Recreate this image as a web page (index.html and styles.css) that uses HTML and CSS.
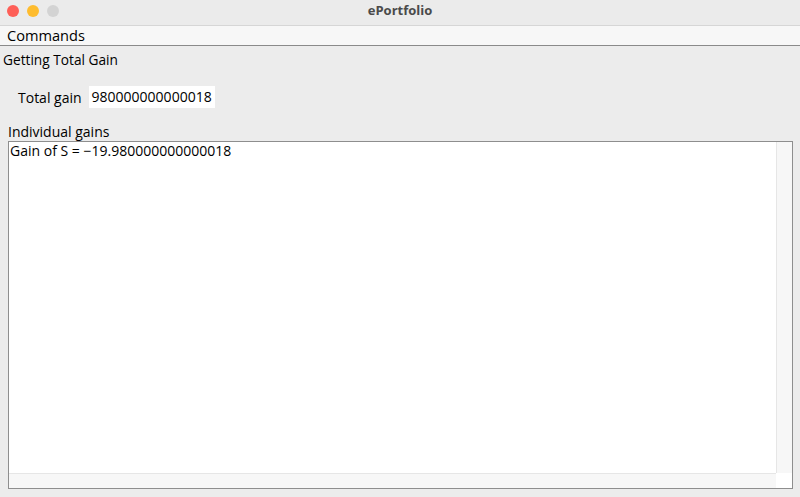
FILE: index.html
```html
<!DOCTYPE html>
<html>
<head>
<meta charset="utf-8">
<link rel="stylesheet" href="styles.css">
</head>
<body>
<div class="window">
  <div class="titlebar">
    <div class="lights">
      <span class="light red"></span>
      <span class="light yellow"></span>
      <span class="light gray"></span>
    </div>
    <div class="title">ePortfolio</div>
  </div>
  <div class="menubar"><span class="menu">Commands</span></div>
  <div class="content">
    <div class="heading">Getting Total Gain</div>
    <div class="row">
      <span class="label">Total gain</span>
      <span class="field">980000000000018</span>
    </div>
    <div class="section-label">Individual gains</div>
    <div class="textarea">
      <div class="text-main">
        <div class="text">Gain of S = −19.980000000000018</div>
        <div class="vscroll"></div>
      </div>
      <div class="hscroll-row">
        <div class="hscroll"></div>
        <div class="corner"></div>
      </div>
    </div>
  </div>
</div>
</body>
</html>
```

FILE: styles.css
```css
html, body {
  margin: 0;
  padding: 0;
}
body {
  width: 800px;
  height: 497px;
  overflow: hidden;
  background: #ececec;
  font-family: "Open Sans", "DejaVu Sans", sans-serif;
  color: #000;
}
.window {
  display: flex;
  flex-direction: column;
  height: 497px;
}
.titlebar {
  height: 25px;
  background: #ebebeb;
  border-bottom: 1px solid #d6d6d6;
  display: flex;
  align-items: center;
  position: relative;
}
.lights {
  display: flex;
  gap: 8px;
  padding-left: 7px;
  margin-top: -3px;
}
.light {
  width: 12px;
  height: 12px;
  border-radius: 50%;
  display: block;
}
.red { background: #fe5f57; }
.yellow { background: #febc2e; }
.gray { background: #d3d3d3; }
.title {
  position: absolute;
  left: 0;
  right: 0;
  top: 0;
  line-height: 21px;
  text-align: center;
  font-weight: bold;
  font-size: 13px;
  color: #4a4a4a;
}
.menubar {
  height: 19px;
  background: #f7f7f7;
  border-bottom: 1px solid #8a8a8a;
  padding-left: 7px;
  font-size: 14.6px;
  line-height: 19px;
}
.content {
  flex: 1;
  display: flex;
  flex-direction: column;
  font-size: 14px;
}
.heading {
  padding-left: 3px;
  margin-top: 5px;
  line-height: 18px;
  font-size: 13.7px;
}
.row {
  display: flex;
  align-items: center;
  margin-top: 17px;
  padding-left: 18px;
  gap: 7px;
}
.field {
  background: #fff;
  height: 22px;
  line-height: 22px;
  padding: 0 0 0 3px;
  width: 123px;
  white-space: nowrap;
  overflow: hidden;
}
.section-label {
  padding-left: 8px;
  margin-top: 15px;
  line-height: 18px;
}
.textarea {
  margin: 0 7px 0 8px;
  height: 346px;
  border: 1px solid #8e8e8e;
  background: #fff;
  display: flex;
  flex-direction: column;
}
.text-main {
  flex: 1;
  display: flex;
}
.text {
  flex: 1;
  padding-left: 1px;
  line-height: 18px;
}
.vscroll {
  width: 15px;
  background: #f7f7f7;
  border-left: 1px solid #e6e6e6;
}
.hscroll-row {
  height: 15px;
  display: flex;
}
.hscroll {
  flex: 1;
  background: #f7f7f7;
  border-top: 1px solid #e6e6e6;
}
.corner {
  width: 16px;
  background: #fff;
}
```
